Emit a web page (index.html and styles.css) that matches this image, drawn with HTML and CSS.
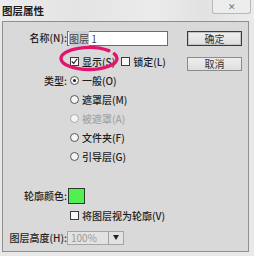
FILE: index.html
```html
<!DOCTYPE html>
<html>
<head>
<meta charset="utf-8">
<link rel="stylesheet" href="styles.css">
</head>
<body>
<div class="titlebar">
  <span class="title">图层属性</span>
  <span class="close">✕</span>
</div>
<div class="window">
  <div class="form">
    <div class="row r1"><span class="lbl">名称(N):</span><span class="input"><span class="sel">图层</span> 1</span></div>
    <div class="row r2 ind">
      <span class="opt"><span class="cb"><svg viewBox="0 0 9 9" width="7" height="7"><polyline points="1,4.5 3.5,7 8,1" fill="none" stroke="#222" stroke-width="1.4"/></svg></span>显示(S)</span>
      <span class="opt lock"><span class="cb"></span>锁定(L)</span>
    </div>
    <div class="row"><span class="lbl">类型:</span><span class="opt"><span class="rd on"></span>一般(O)</span></div>
    <div class="row ind"><span class="opt"><span class="rd"></span>遮罩层(M)</span></div>
    <div class="row ind dis"><span class="opt"><span class="rd"></span>被遮罩(A)</span></div>
    <div class="row ind"><span class="opt"><span class="rd"></span>文件夹(F)</span></div>
    <div class="row ind"><span class="opt"><span class="rd"></span>引导层(G)</span></div>
    <div class="row r8"><span class="lbl">轮廓颜色:</span><span class="swatch"></span></div>
    <div class="row r9 ind"><span class="opt"><span class="cb"></span>将图层视为轮廓(V)</span></div>
    <div class="row r10"><span class="lbl">图层高度(H):</span><span class="select"><span class="val">100%</span><span class="arrow"></span></span></div>
  </div>
  <div class="actions">
    <span class="btn default">确定</span>
    <span class="btn">取消</span>
  </div>
</div>
<svg class="mark" width="64" height="30" viewBox="0 0 64 30">
  <path d="M4 14.5 A28 11 0 0 0 60 14.5 M4 14.5 A28 11 0 0 1 51.8 6.7 M57.4 9.9 A28 11 0 0 1 60 14.5" fill="none" stroke="#e3146c" stroke-width="3.4" stroke-linecap="round"/>
</svg>
</body>
</html>
```
FILE: styles.css
```css
html, body {
  margin: 0;
  padding: 0;
}
body {
  width: 254px;
  height: 256px;
  overflow: hidden;
  background: #e8e8e8;
  font-family: "Noto Sans CJK SC", "Noto Sans", sans-serif;
  font-size: 10px;
  color: #1f1f1f;
  position: relative;
}
.titlebar {
  height: 21px;
  display: flex;
  justify-content: space-between;
  align-items: flex-start;
  background: linear-gradient(90deg, #ececec 0%, #e4e4e4 30%, #ebebeb 60%, #e2e2e2 80%, #ececec 100%);
}
.title {
  padding: 5px 0 0 2px;
  line-height: 12px;
  font-size: 10.5px;
  font-weight: 700;
  color: #1c1c1c;
}
.close {
  width: 37px;
  height: 13px;
  margin-right: 3px;
  border: 1px solid #b8b8b8;
  border-top: none;
  border-radius: 0 0 3px 3px;
  background: #ededed;
  color: #777;
  font-size: 9px;
  line-height: 13px;
  text-align: center;
}
.window {
  margin: 0 5px 0 2px;
  height: 229px;
  border: 1px solid #8f8f8f;
  background: #d9d9d9;
  display: flex;
}
.form {
  flex: 1;
  padding-top: 6px;
}
.row {
  display: flex;
  align-items: center;
  height: 19px;
  line-height: 12px;
  white-space: nowrap;
}
.row.ind {
  padding-left: 64px;
}
.r1 { height: 20px; }
.r2 { margin-top: 4px; }
.r8 { margin-top: 20px; }
.r9 { margin-top: 1px; }
.r10 { margin-top: 3px; }
.lbl {
  width: 64px;
  flex: none;
  text-align: right;
  font-weight: 500;
}
.input {
  box-sizing: border-box;
  width: 101px;
  height: 15px;
  border: 1px solid #6d6d6d;
  background: #fff;
  padding-left: 1px;
  line-height: 13px;
  color: #444;
}
.sel {
  background: #c9cfd8;
}
.opt {
  display: flex;
  align-items: center;
  margin-left: 3px;
  font-weight: 500;
}
.opt.lock {
  margin-left: 6px;
}
.cb {
  box-sizing: border-box;
  width: 9px;
  height: 9px;
  border: 1px solid #3c3c3c;
  background: #fafafa;
  margin-right: 3px;
  display: flex;
  align-items: center;
  justify-content: center;
}
.rd {
  box-sizing: border-box;
  width: 9px;
  height: 9px;
  border: 1px solid #555;
  border-radius: 50%;
  background: #f4f4f4;
  margin-right: 3px;
  display: flex;
  align-items: center;
  justify-content: center;
}
.rd.on::after {
  content: "";
  width: 3px;
  height: 3px;
  border-radius: 50%;
  background: #222;
}
.dis {
  color: #a5a5a5;
}
.dis .rd {
  border-color: #aaa;
}
.swatch {
  box-sizing: border-box;
  width: 17px;
  height: 16px;
  margin-left: 1px;
  border: 1px solid #2e3a2e;
  background: #50f050;
}
.select {
  box-sizing: border-box;
  width: 57px;
  height: 14px;
  border: 1px solid #a5a5a5;
  background: #e2e2e2;
  display: flex;
  align-items: center;
}
.val {
  width: 41px;
  padding-left: 3px;
  box-sizing: border-box;
  color: #9a9a9a;
  border-right: 1px solid #a0a0a0;
  height: 12px;
  line-height: 12px;
}
.arrow {
  margin-left: 4px;
  width: 0;
  height: 0;
  border-left: 3px solid transparent;
  border-right: 3px solid transparent;
  border-top: 5px solid #222;
}
.actions {
  width: 55px;
  margin-right: 6px;
  padding-top: 9px;
  display: flex;
  flex-direction: column;
}
.btn {
  box-sizing: border-box;
  height: 14px;
  border: 1px solid #8c8c8c;
  background: linear-gradient(#eeeeee, #dedede);
  text-align: center;
  line-height: 12px;
  color: #333;
}
.btn.default {
  height: 15px;
  border: 1px solid #3a3a3a;
  box-shadow: inset 0 0 0 1px #c4c4c4;
  line-height: 13px;
  margin-bottom: 11px;
}
.mark {
  position: absolute;
  left: 57px;
  top: 44px;
}
```
